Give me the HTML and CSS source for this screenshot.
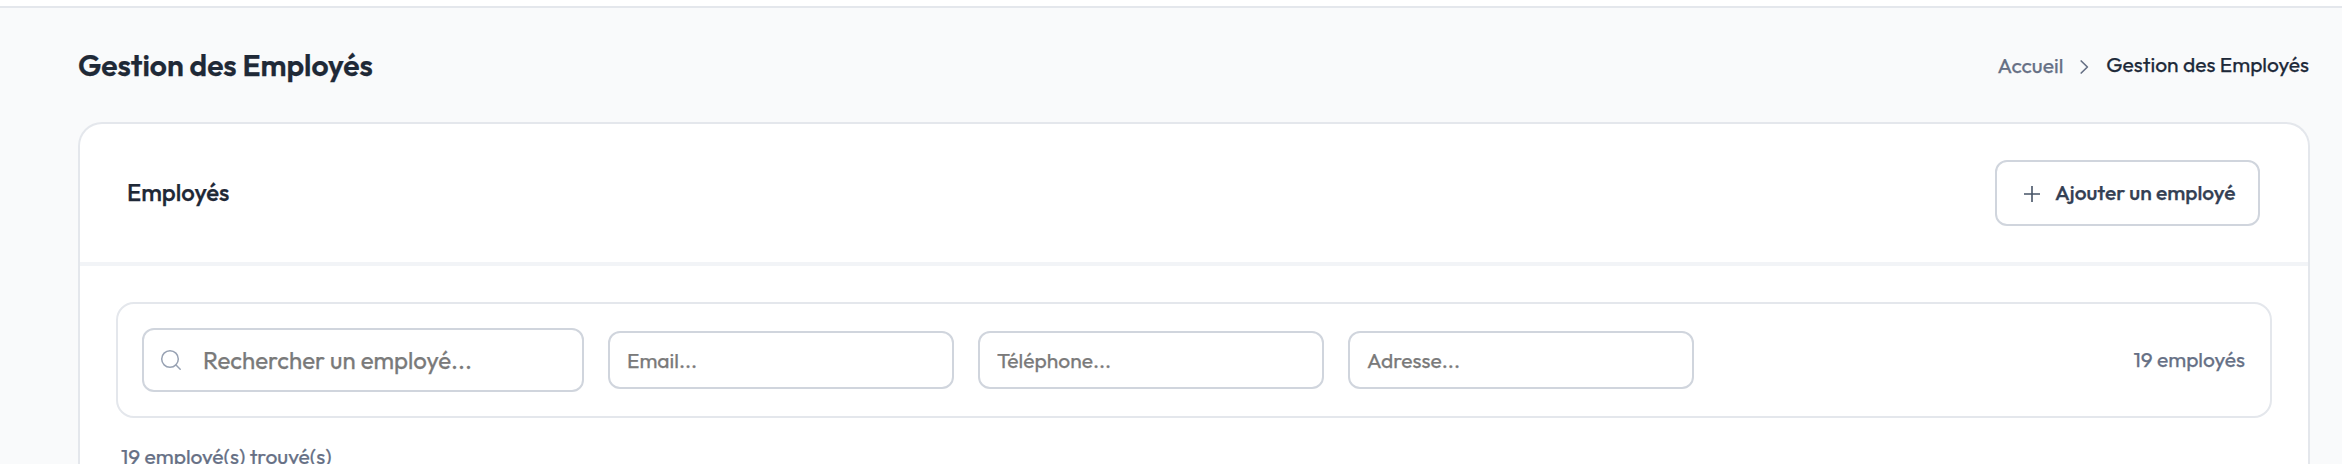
FILE: index.html
```html
<!DOCTYPE html>
<html lang="fr">
<head>
<meta charset="utf-8">
<title>Gestion des Employés</title>
<link rel="stylesheet" href="styles.css">
</head>
<body>
<div class="topbar"></div>
<main class="page">
  <header class="page-header">
    <h1 class="page-title">Gestion des Employés</h1>
    <nav class="breadcrumb">
      <a class="crumb-link">Accueil</a>
      <svg class="crumb-sep" viewBox="0 0 12 18" fill="none" stroke="currentColor" stroke-width="1.7" stroke-linecap="round" stroke-linejoin="round"><path d="M2.2 3l6.2 6-6.2 6"/></svg>
      <span class="crumb-current">Gestion des Employés</span>
    </nav>
  </header>
  <section class="card">
    <div class="card-header">
      <h2 class="card-title">Employés</h2>
      <button class="add-button" type="button">
        <svg class="add-icon" viewBox="0 0 16 16" fill="none" stroke="currentColor" stroke-width="1.6"><path d="M8 0v16M0 8h16"/></svg>
        <span class="add-label">Ajouter un employé</span>
      </button>
    </div>
    <div class="card-body">
      <div class="filters">
        <label class="search">
          <svg class="search-icon" viewBox="0 0 22 22" fill="none" stroke="currentColor" stroke-width="1.5" stroke-linecap="round"><circle cx="10" cy="10" r="8.3"/><path d="M16 16l4.2 4.2"/></svg>
          <input class="search-input" type="text" placeholder="Rechercher un employé...">
        </label>
        <input class="field" type="text" placeholder="Email...">
        <input class="field" type="text" placeholder="Téléphone...">
        <input class="field" type="text" placeholder="Adresse...">
        <span class="count">19 employés</span>
      </div>
      <p class="found">19 employé(s) trouvé(s)</p>
    </div>
  </section>
</main>
</body>
</html>
```

FILE: styles.css
```css
* { box-sizing: border-box; }
body {
  margin: 0;
  height: 464px;
  overflow: hidden;
  background: #f9fafb;
  color: #1f2937;
  font-family: "Outfit", "Lato", sans-serif;
  -webkit-text-stroke: 0.25px currentColor;
}
.topbar { height: 8px; background: #fff; border-bottom: 2px solid #e4e7ec; }
.page { height: 456px; padding: 0 32px 0 78px; }
.page-header { height: 114px; padding-right: 1px; display: flex; align-items: center; justify-content: space-between; }
.page-title { margin: 0; font-size: 30px; line-height: 36px; font-weight: 600; letter-spacing: -0.03px; }
.breadcrumb { display: flex; align-items: center; font-size: 21px; line-height: 26px; }
.crumb-link { color: #667085; }
.crumb-sep { width: 12px; height: 18px; margin: 3px 15px 0 16px; color: #667085; }
.crumb-current { color: #1d2939; margin-top: -2px; }
.card { height: 342px; background: #fff; border: 2px solid #e4e7ec; border-bottom: 0; border-radius: 24px 24px 0 0; }
.card-header { height: 142px; padding: 0 48px 0 47px; display: flex; align-items: center; justify-content: space-between; border-bottom: 4px solid #f2f4f7; }
.card-title { margin: 0 0 2px; font-size: 24px; line-height: 30px; font-weight: 500; }
.add-button { width: 265px; height: 66px; padding: 0 0 0 27px; display: flex; align-items: center; gap: 15px; border: 2px solid #d0d5dd; border-radius: 12px; background: #fff; color: #344054; font-family: inherit; font-size: 21px; font-weight: 500; -webkit-text-stroke: 0.25px currentColor; }
.add-icon { width: 16px; height: 16px; margin-top: 2px; color: #475467; }
.add-label { margin-bottom: 2px; white-space: nowrap; }
.card-body { padding: 36px 36px 0; }
.filters { height: 116px; padding: 0 25px 0 24px; display: flex; align-items: center; gap: 24px; border: 2px solid #e4e7ec; border-radius: 18px; }
.search { width: 442px; height: 64px; padding-left: 16px; display: flex; align-items: center; border: 2px solid #d0d5dd; border-radius: 12px; }
.search-icon { width: 22px; height: 22px; color: #98a2b3; }
.search-input { border: 0; padding: 0; margin-left: 21px; width: 350px; font-family: inherit; font-size: 24px; }
.field { width: 346px; height: 58px; padding: 0 17px; border: 2px solid #d0d5dd; border-radius: 12px; font-family: inherit; font-size: 21px; }
.search-input::placeholder, .field::placeholder { color: #7a7a7a; -webkit-text-stroke: 0.25px currentColor; }
.count { margin: 0 0 2px auto; font-size: 21px; line-height: 26px; color: #667085; }
.found { margin: 23px 0 0 5px; font-size: 21px; line-height: 30px; color: #667085; }
```
